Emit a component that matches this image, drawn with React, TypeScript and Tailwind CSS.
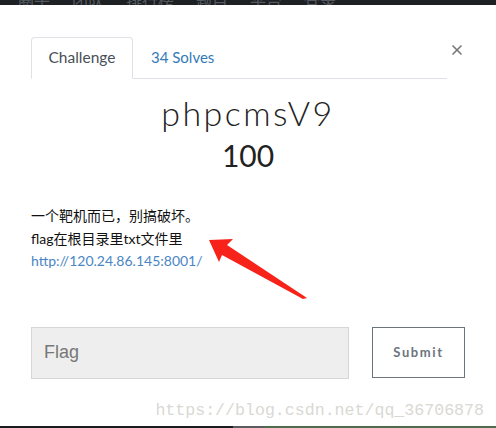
import { X } from 'lucide-react';

// Clipped nav labels peeking in at the very top of the screenshot.
const navItems = ['圈子', '团队', '排行榜', '题目', '平台', '登录'];

export default function App() {
  return (
    <div className="relative w-[496px] h-[428px] bg-white overflow-hidden flex flex-col font-['Lato','Noto_Sans_CJK_SC',sans-serif] text-[#333]">
      {/* dark page behind the modal */}
      <div className="h-[5px] bg-[#1e2124] overflow-hidden">
        <div className="flex gap-[22px] pl-[18px] -mt-[11px] text-[16px] text-[#555a60]">
          {navItems.map(item => (
            <span key={item}>{item}</span>
          ))}
        </div>
      </div>

      <div className="px-[31px] pt-[32px] flex-1">
        <div className="flex items-start">
          <ul className="flex w-[420px] h-[42px] border-b border-[#dee2e6]">
            <li className="w-[102px] h-[42px] flex items-center justify-center border border-[#dee2e6] border-b-white rounded-t-[4px] text-[15.5px] text-[#495057] bg-white">
              Challenge
            </li>
            <li className="h-[41px] px-[18px] flex items-center text-[15px] text-[#337ab7]">
              34 Solves
            </li>
          </ul>
          <button className="ml-[2px] mt-[5px] text-[#777]">
            <X size={16} strokeWidth={2.5} />
          </button>
        </div>

        <h3 className="mt-[14px] text-center text-[34px] leading-[40px] font-light tracking-[2.4px] text-[#222]">
          phpcmsV9
        </h3>
        <p className="mt-[4px] text-center text-[30px] leading-[36px] text-[#222]">100</p>

        <div className="mt-[32px] text-[14px] leading-[22.5px] text-[#111]">
          <p>一个靶机而已，别搞破坏。</p>
          <p>flag在根目录里txt文件里</p>
          <p className="text-[#4a86c5]">http://120.24.86.145:8001/</p>
        </div>

        <div className="mt-[54px] flex items-center">
          <div className="w-[318px] h-[52px] bg-[#eee] border border-[#d4d6d9] flex items-center px-[12px] text-[18px] text-[#777] font-['Liberation_Sans',sans-serif]">
            Flag
          </div>
          <button className="ml-[23px] w-[93px] h-[51px] border border-[#6c757d] text-[13px] font-bold tracking-[1.6px] text-[#6c757d]">
            Submit
          </button>
        </div>

        <div className="mt-[23px] -mr-[19px] text-right text-[16.6px] leading-[18px] text-[#d9d9d4] font-['Liberation_Mono',monospace]">
          https://blog.csdn.net/qq_36706878
        </div>
      </div>

      {/* red annotation arrow */}
      <svg className="absolute left-[205px] top-[235px]" width="110" height="70" viewBox="0 0 110 70">
        <polygon points="4,5 28,4 22,10 102,63 98,64 17,20 14,27" fill="#f7221a" />
      </svg>

      {/* taskbar strip at the bottom */}
      <div className="h-[2px] flex">
        <div className="w-[233px] bg-[#1c1c20]" />
        <div className="w-[30px] bg-[#5c5c5e]" />
        <div className="flex-1 bg-[#4f6a4c]" />
      </div>
    </div>
  );
}
